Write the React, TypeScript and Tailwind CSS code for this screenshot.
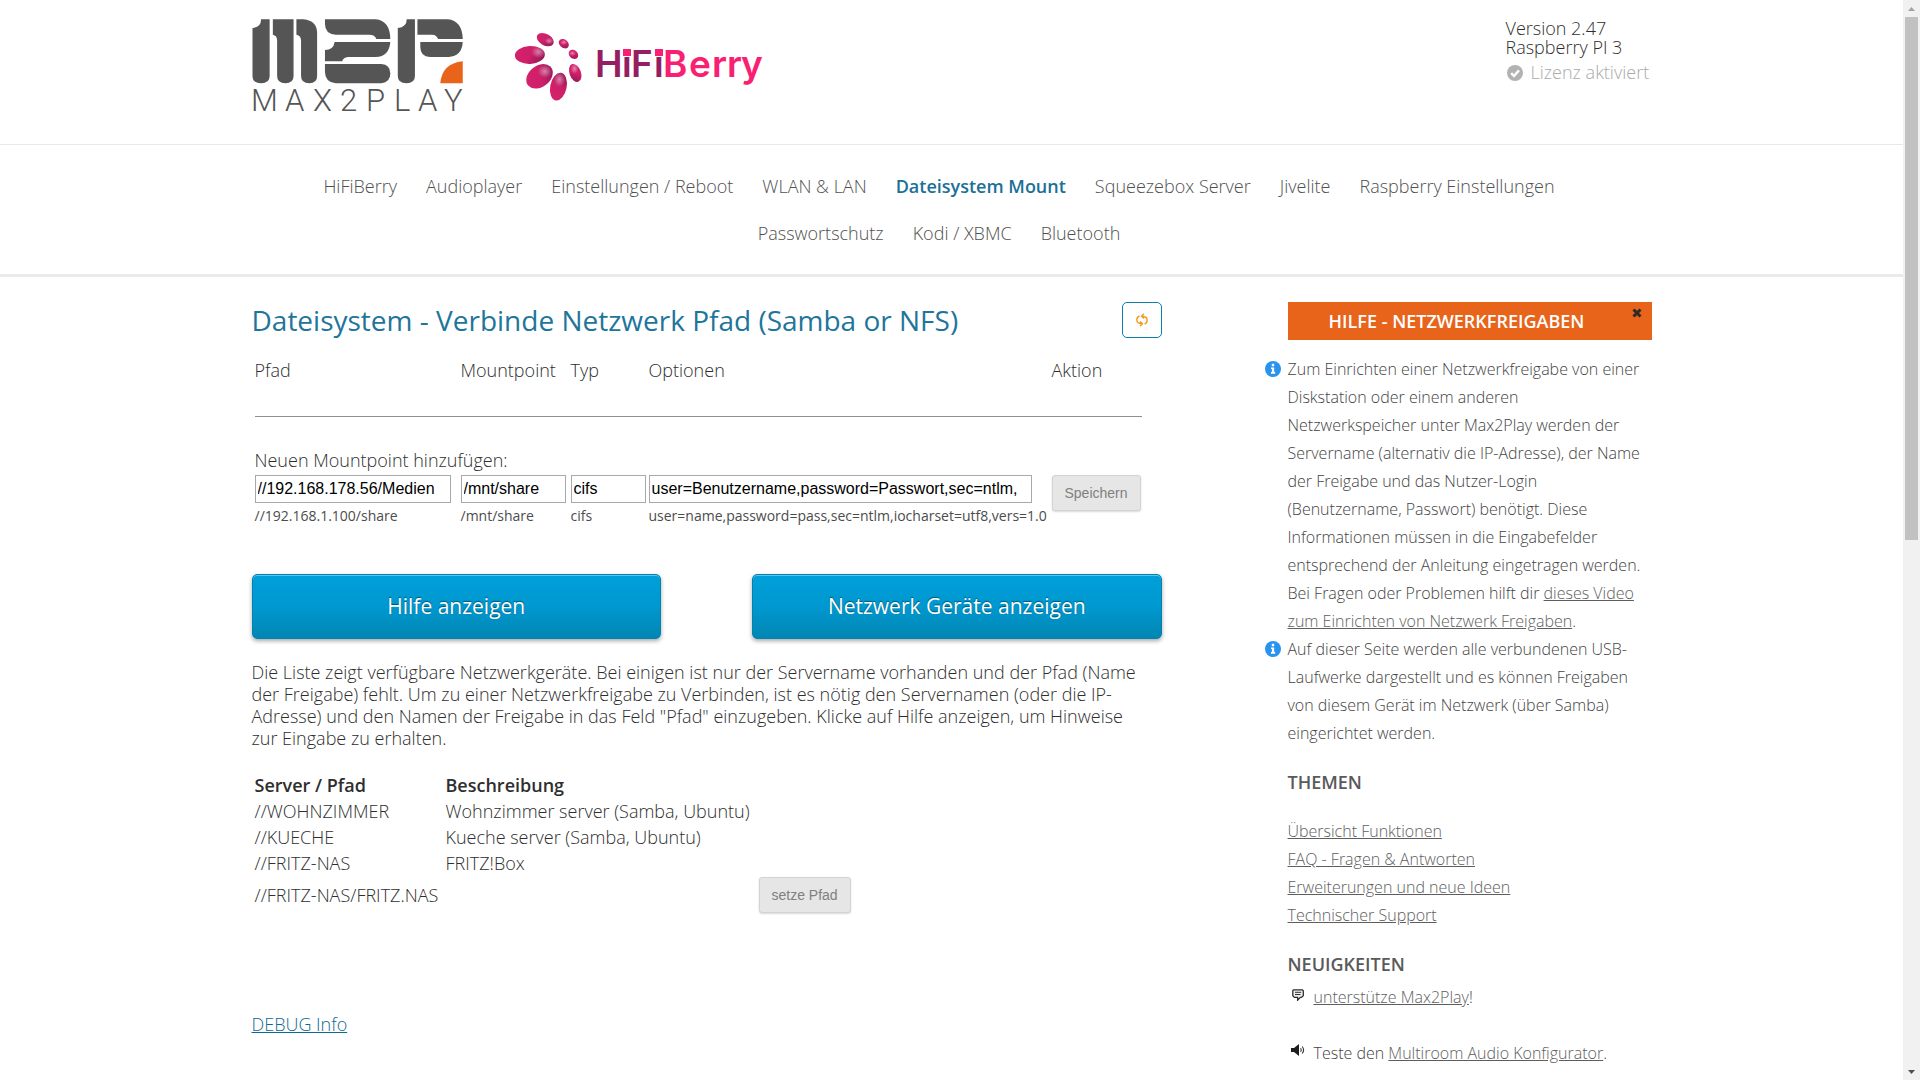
import React from "react";

const navItems = [
  "HiFiBerry",
  "Audioplayer",
  "Einstellungen / Reboot",
  "WLAN & LAN",
  "Dateisystem Mount",
  "Squeezebox Server",
  "Jivelite",
  "Raspberry Einstellungen",
  "Passwortschutz",
  "Kodi / XBMC",
  "Bluetooth",
];

const devices = [
  { path: "//WOHNZIMMER", text: "Wohnzimmer server (Samba, Ubuntu)" },
  { path: "//KUECHE", text: "Kueche server (Samba, Ubuntu)" },
  { path: "//FRITZ-NAS", text: "FRITZ!Box" },
];

const topics = [
  "Übersicht Funktionen",
  "FAQ - Fragen & Antworten",
  "Erweiterungen und neue Ideen",
  "Technischer Support",
];

function Max2PlayLogo() {
  return (
    <svg viewBox="12 18 212 96" className="h-24 w-[212px]" role="img" aria-label="Max2Play">
      <g transform="scale(0.357 0.3333)">
        <g fill="#555555">
          <path d="M59 58H83V228Q83 250 59 250Q35 250 35 228V84Q59 82 59 58Z" />
          <path d="M92 58H150V228Q150 250 127 250Q104 250 104 228V122Q104 106 92 104Z" />
          <path d="M158 58H178Q216 62 216 100V228Q216 250 194 250Q171 250 171 228V122Q171 106 158 104Z" />
          <path d="M238 58H380Q420 62 421 117H382Q378 104 362 104H268Q238 102 238 72Z" />
          <path d="M265 126H421Q418 170 380 171H302Q290 172 286 184H238V150Q262 150 265 126Z" />
          <path d="M238 192H396Q421 194 421 220Q421 248 396 250H268Q238 246 238 216Z" />
          <path d="M467 58H490V228Q490 250 466 250Q442 250 442 228V84Q467 82 467 58Z" />
          <path d="M497 58H582Q622 62 624 117H555Q550 104 538 104H497Z" />
          <path d="M505 126H624Q622 168 584 171H532Q505 170 505 140Z" />
        </g>
        <path d="M624 184V250H561Q566 190 624 184Z" fill="#e8641b" />
      </g>
      <text
        x="11 45 73 100 126 154 178 204"
        y="111"
        fontFamily="Roboto, sans-serif"
        fontWeight="300"
        fontSize="31"
        fill="#555555"
      >
        MAX2PLAY
      </text>
    </svg>
  );
}

function HiFiBerryLogo() {
  return (
    <svg viewBox="274 30 252 74" className="h-[74px] w-[252px]" role="img" aria-label="HiFiBerry">
      <defs>
        <linearGradient id="petal" x1="0" y1="0.3" x2="1" y2="0.7">
          <stop offset="0" stopColor="#d5216b" />
          <stop offset="0.5" stopColor="#cf2069" />
          <stop offset="1" stopColor="#97185a" />
        </linearGradient>
        <radialGradient id="shine">
          <stop offset="0" stopColor="#ffffff" stopOpacity="0.45" />
          <stop offset="1" stopColor="#ffffff" stopOpacity="0" />
        </radialGradient>
      </defs>
      <g transform="scale(0.357 0.3333)">
        <g fill="url(#petal)">
          <ellipse cx="855" cy="119" rx="26" ry="17" transform="rotate(32 855 119)" />
          <ellipse cx="907" cy="131" rx="16" ry="12" transform="rotate(45 907 131)" />
          <ellipse cx="934" cy="163" rx="15" ry="12" transform="rotate(50 934 163)" />
          <ellipse cx="939" cy="219" rx="28" ry="16" transform="rotate(72 939 219)" />
          <ellipse cx="892" cy="260" rx="42" ry="23" transform="rotate(-80 892 260)" />
          <ellipse cx="839" cy="229" rx="42" ry="31" transform="rotate(-44 839 229)" />
          <ellipse cx="812" cy="165" rx="42" ry="27" transform="rotate(-3 812 165)" />
        </g>
        <g fill="url(#shine)">
          <ellipse cx="866" cy="123" rx="12" ry="10" />
          <ellipse cx="907" cy="127" rx="10" ry="8" />
          <ellipse cx="931" cy="160" rx="10" ry="8" />
          <ellipse cx="937" cy="206" rx="11" ry="16" />
          <ellipse cx="895" cy="238" rx="16" ry="22" />
          <ellipse cx="854" cy="214" rx="20" ry="20" />
          <ellipse cx="836" cy="156" rx="20" ry="18" />
        </g>
      </g>
      <text
        x="355 382 391 414 423 449 472 487 501"
        y="77"
        fontFamily="Inter, sans-serif"
        fontWeight="600"
        fontSize="37"
        fill="#951e62"
      >
        HiFi<tspan fill="#f91f72">Berry</tspan>
      </text>
      <rect x="383" y="49" width="8" height="7" fill="#f91f72" />
      <rect x="415" y="49" width="8" height="7" fill="#f91f72" />
    </svg>
  );
}

function InfoIcon() {
  return (
    <svg viewBox="0 0 16 16" className="absolute top-[6px] -left-[23px] size-4" aria-hidden="true">
      <circle cx="8" cy="8" r="8" fill="#2a93ee" />
      <path d="M6.8 2.8H9.2V5.2H6.8ZM6 6.4H9.2V11H10.2V12.8H6V11H6.9V8H6Z" fill="#ffffff" />
    </svg>
  );
}

function SideLink({ children }: { children: React.ReactNode }) {
  return (
    <a href="#" className="text-[#5e5e5e] underline">
      {children}
    </a>
  );
}

function GreyButton({ children }: { children: React.ReactNode }) {
  return (
    <button
      type="button"
      className="h-9 rounded-[3px] border border-[#d3d3d3] bg-[#e6e6e6] px-3 font-['Liberation_Sans',Arial,sans-serif] text-sm whitespace-nowrap text-[#808080] shadow-[0_1px_2px_rgba(0,0,0,0.15)]"
    >
      {children}
    </button>
  );
}

function BlueButton({ children }: { children: React.ReactNode }) {
  return (
    <button
      type="button"
      className="h-[65px] w-[45%] rounded-[5px] border border-[#0482ae] bg-linear-to-b from-[#009fd9] via-[#0098d0] to-[#0286b2] pb-[2px] text-[21px] font-normal text-white shadow-[inset_0_1px_0_#5cc3ea,0_2px_4px_rgba(0,0,0,0.35)] [text-shadow:0_-1px_1px_rgba(0,40,50,0.6)]"
    >
      {children}
    </button>
  );
}

const fields = [
  { id: "path", value: "//192.168.178.56/Medien", hint: "//192.168.1.100/share", width: "w-[196px]" },
  { id: "mountpoint", value: "/mnt/share", hint: "/mnt/share", width: "w-[105px]" },
  { id: "type", value: "cifs", hint: "cifs", width: "w-[75px]" },
  {
    id: "options",
    value: "user=Benutzername,password=Passwort,sec=ntlm,",
    hint: "user=name,password=pass,sec=ntlm,iocharset=utf8,vers=1.0",
    width: "w-[383px]",
  },
];

function MountForm() {
  return (
    <form className="mt-[21px] pl-[3px]">
      <table className="w-[887px] table-fixed text-left">
        <colgroup>
          <col className="w-[206px]" />
          <col className="w-[110px]" />
          <col className="w-[78px]" />
          <col className="w-[403px]" />
          <col className="w-[90px]" />
        </colgroup>
        <thead>
          <tr>
            {["Pfad", "Mountpoint", "Typ", "Optionen", "Aktion"].map((name) => (
              <th key={name} scope="col" className="font-light">
                {name}
              </th>
            ))}
          </tr>
        </thead>
        <tbody>
          <tr>
            <td colSpan={5} className="pt-[35px] pb-8">
              <hr className="border-t border-[#8f8f8f]" />
            </td>
          </tr>
          <tr>
            <td colSpan={5} className="pb-1">
              Neuen Mountpoint hinzufügen:
            </td>
          </tr>
          <tr className="align-top">
            {fields.map((f) => (
              <td key={f.id}>
                <input
                  id={f.id}
                  type="text"
                  aria-labelledby={`${f.id}-hint`}
                  defaultValue={f.value}
                  className={`${f.width} block h-7 border border-[#a9a9a9] bg-white px-[2px] pb-px font-['Liberation_Sans',Arial,sans-serif] text-base text-black`}
                />
                <label
                  id={`${f.id}-hint`}
                  htmlFor={f.id}
                  className="block pt-[3px] text-sm font-normal whitespace-nowrap text-[#4c4c4c]"
                >
                  {f.hint}
                </label>
              </td>
            ))}
            <td>
              <GreyButton>Speichern</GreyButton>
            </td>
          </tr>
        </tbody>
      </table>
    </form>
  );
}

function Sidebar() {
  return (
    <aside className="w-[26%] text-base leading-7 text-[#444444]">
      <div className="relative flex h-[38px] items-center justify-center bg-[#e8641b] pr-[26px]">
        <h2 className="text-lg font-semibold text-white">HILFE - NETZWERKFREIGABEN</h2>
        <button type="button" aria-label="Hilfe schließen" className="absolute top-[6px] right-[10px]">
          <svg viewBox="0 0 10 10" className="size-[10px]" aria-hidden="true">
            <path d="M1.5 1.5L8.5 8.5M8.5 1.5L1.5 8.5" stroke="#2b2b2b" strokeWidth="3" />
          </svg>
        </button>
      </div>
      <ul className="mt-[15px]">
        <li className="relative">
          <InfoIcon />
          Zum Einrichten einer Netzwerkfreigabe von einer Diskstation oder einem anderen Netzwerkspeicher unter Max2Play
          werden der Servername (alternativ die IP-Adresse), der Name der Freigabe und das Nutzer-Login (Benutzername,
          Passwort) benötigt. Diese Informationen müssen in die Eingabefelder entsprechend der Anleitung eingetragen
          werden. Bei Fragen oder Problemen hilft dir{" "}
          <SideLink>dieses Video zum Einrichten von Netzwerk Freigaben</SideLink>.
        </li>
        <li className="relative">
          <InfoIcon />
          Auf dieser Seite werden alle verbundenen USB-Laufwerke dargestellt und es können Freigaben von diesem Gerät im
          Netzwerk (über Samba) eingerichtet werden.
        </li>
      </ul>
      <h2 className="mt-[21px] text-lg leading-7 font-semibold text-[#5a5a5a]">THEMEN</h2>
      <ul className="mt-[21px]">
        {topics.map((t) => (
          <li key={t}>
            <SideLink>{t}</SideLink>
          </li>
        ))}
      </ul>
      <h2 className="mt-[21px] text-lg leading-7 font-semibold text-[#5a5a5a]">NEUIGKEITEN</h2>
      <ul className="mt-[5px] flex flex-col gap-7">
        <li className="flex gap-[10px] pl-1">
          <svg viewBox="0 0 12 12" className="mt-[6px] size-3 shrink-0" aria-hidden="true">
            <path d="M1.6 .8H10.4L11.3 1.7V6.6L9.4 8.4H8.4L5.6 11.2V8.4H2.4L.8 6.8V1.6Z" fill="#eeeeee" stroke="#2e2e2e" strokeWidth="1.3" />
            <path d="M3 3.3H9.2M3 5.5H8.5" stroke="#2e2e2e" strokeWidth="1" />
          </svg>
          <span>
            <SideLink>unterstütze Max2Play</SideLink>!
          </span>
        </li>
        <li className="flex gap-[9px] pl-[3px]">
          <svg viewBox="0 0 14 12" className="mt-[5px] h-3 w-[14px] shrink-0" aria-hidden="true">
            <path d="M0 4H3L8 0V12L3 8H0Z" fill="#1e1e1e" />
            <path d="M9.6 4.3Q10.8 6 9.6 7.7M11.2 2.5Q14 6 11.2 9.5" fill="none" stroke="#333333" strokeWidth="1.1" />
          </svg>
          <span>
            Teste den <SideLink>Multiroom Audio Konfigurator</SideLink>.
          </span>
        </li>
      </ul>
    </aside>
  );
}

function ScrollBar() {
  return (
    <div className="flex w-[17px] shrink-0 flex-col items-center bg-[#f1f1f1]" aria-hidden="true">
      <svg viewBox="0 0 17 17" className="size-[17px] shrink-0">
        <path d="M5 11L8.5 7L12 11Z" fill="#a3a3a3" />
      </svg>
      <div className="w-full grow">
        <div className="mx-[2px] h-1/2 bg-[#c1c1c1]" />
      </div>
      <svg viewBox="0 0 17 17" className="size-[17px] shrink-0">
        <path d="M5 7L8.5 11L12 7Z" fill="#505050" />
      </svg>
    </div>
  );
}

export default function App() {
  return (
    <div className="flex h-screen overflow-hidden bg-white font-['Open_Sans',sans-serif] text-lg leading-[22px] font-light text-[#2e2e2e]">
      <div className="min-w-0 flex-1 overflow-hidden">
        <header className="h-[145px] border-b border-[#e8e8e8]">
          <div className="mx-auto flex max-w-[1400px] items-start">
            <div className="pt-[18px]">
              <Max2PlayLogo />
            </div>
            <div className="pt-[30px] pl-[50px]">
              <HiFiBerryLogo />
            </div>
            <div className="ml-auto w-[146px] pt-[19px] leading-[19px]">
              <p>Version 2.47</p>
              <p>Raspberry PI 3</p>
              <p className="flex items-center gap-2 pt-[6px] pl-px whitespace-nowrap text-[#aaaaaa]">
                <svg viewBox="0 0 16 16" className="size-4 shrink-0" aria-hidden="true">
                  <circle cx="8" cy="8" r="8" fill="#b2b2b2" />
                  <path d="M4.2 8.2L7 11L12 5.4" fill="none" stroke="#ffffff" strokeWidth="2.4" />
                </svg>
                Lizenz aktiviert
              </p>
            </div>
          </div>
        </header>

        <nav className="border-b-[3px] border-[#ebebeb] pt-[18px] pb-[17px]">
          <ul className="mx-auto flex max-w-[1400px] flex-wrap justify-center gap-x-1 leading-[47px] text-[#505050]">
            {navItems.map((item) => (
              <li key={item} className="mr-[25px]">
                <a href="#" className={item === "Dateisystem Mount" ? "font-semibold text-[#1c7096]" : ""}>
                  {item}
                </a>
              </li>
            ))}
          </ul>
        </nav>

        <div className="mx-auto flex max-w-[1400px] items-start justify-between pt-[25px]">
          <main className="w-[65%]">
            <div className="flex items-start justify-between">
              <h1 className="text-[28px] leading-9 font-normal text-[#21759b]">
                Dateisystem - Verbinde Netzwerk Pfad (Samba or NFS)
              </h1>
              <button
                type="button"
                aria-label="Neu laden"
                className="flex h-9 w-10 items-center justify-center rounded-[5px] border border-[#0a81ab]"
              >
                <svg viewBox="0 0 12 14" className="h-[14px] w-3" fill="none" stroke="#f39a21" strokeWidth="1.4" aria-hidden="true">
                  <path d="M8.6 11Q11.2 10 11.2 7.2Q11.2 3.4 6 3.2M8 .7L5.5 3.2L8 5.6" />
                  <path d="M3.4 3Q.8 4 .8 6.8Q.8 10.6 6 10.8M4 13.3L6.5 10.8L4 8.4" />
                </svg>
              </button>
            </div>

            <MountForm />

            <div className="mt-12 flex justify-between">
              <BlueButton>Hilfe anzeigen</BlueButton>
              <BlueButton>Netzwerk Geräte anzeigen</BlueButton>
            </div>

            <p className="mt-[22px] pr-3">
              Die Liste zeigt verfügbare Netzwerkgeräte. Bei einigen ist nur der Servername vorhanden und der Pfad (Name
              der Freigabe) fehlt. Um zu einer Netzwerkfreigabe zu Verbinden, ist es nötig den Servernamen (oder die
              IP-Adresse) und den Namen der Freigabe in das Feld "Pfad" einzugeben. Klicke auf Hilfe anzeigen, um
              Hinweise zur Eingabe zu erhalten.
            </p>

            <table className="mt-[22px] border-separate border-spacing-x-[2px] border-spacing-y-[2px] text-left">
              <thead>
                <tr>
                  <th scope="col" className="w-[189px] p-px font-semibold">Server / Pfad</th>
                  <th scope="col" className="w-[311px] p-px font-semibold">Beschreibung</th>
                  <td />
                </tr>
              </thead>
              <tbody>
                {devices.map((d) => (
                  <tr key={d.path}>
                    <td className="p-px">{d.path}</td>
                    <td className="p-px">{d.text}</td>
                    <td />
                  </tr>
                ))}
                <tr>
                  <td className="p-px">//FRITZ-NAS/FRITZ.NAS</td>
                  <td />
                  <td className="px-px">
                    <GreyButton>setze Pfad</GreyButton>
                  </td>
                </tr>
              </tbody>
            </table>

            <a href="#" className="mt-[98px] inline-block text-[#0f6a92] underline">
              DEBUG Info
            </a>
          </main>

          <Sidebar />
        </div>
      </div>
      <ScrollBar />
    </div>
  );
}
